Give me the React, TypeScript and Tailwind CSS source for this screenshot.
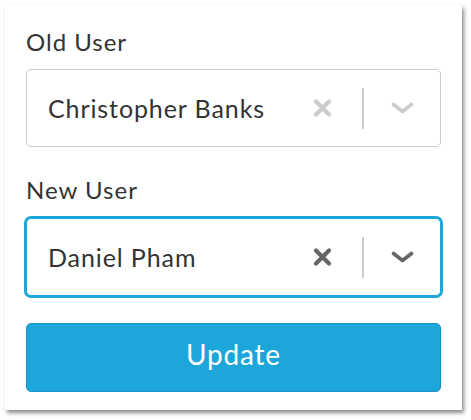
const ClearIcon = ({ color }: { color: string }) => (
  <svg width="19" height="20" viewBox="0 0 19 20" fill="none">
    <path d="M3 3.5L16 16.5M16 3.5L3 16.5" stroke={color} strokeWidth="4.2" strokeLinecap="round" />
  </svg>
);

const ChevronIcon = ({ color }: { color: string }) => (
  <svg width="23" height="12" viewBox="0 0 23 12" fill="none">
    <path d="M2.5 2.5L11.5 9.5L20.5 2.5" stroke={color} strokeWidth="3.6" strokeLinecap="round" strokeLinejoin="round" />
  </svg>
);

const Select = ({ value, focused }: { value: string; focused?: boolean }) => {
  const iconColor = focused ? "#666666" : "#cccccc";
  return (
    <div
      className={
        "flex h-[78px] items-center rounded-[5px] border bg-white pl-[21px] pr-[26px] " +
        (focused ? "border-[#1ca6d9] shadow-[0_0_0_2px_#1ca6d9]" : "border-[#cccccc]")
      }
    >
      <span className="flex-1 text-[25px] leading-[30px] tracking-[0.9px] text-[#333333]">{value}</span>
      <ClearIcon color={iconColor} />
      <span className="ml-[30px] mr-[27px] h-[41px] w-[2px] bg-[#cccccc]" />
      <ChevronIcon color={iconColor} />
    </div>
  );
};

export default function App() {
  return (
    <div className="min-h-[420px] bg-white pl-[5px] pt-[5px] font-['Lato','Liberation_Sans',sans-serif]">
      <div className="h-[405px] w-[457px] bg-white px-[21px] pt-[23px] shadow-[2px_3px_4px_rgba(0,0,0,0.45)]">
        <div className="h-[28px] text-[24px] leading-[28px] tracking-[1px] text-[#333333]">Old User</div>
        <div className="mt-[13px]">
          <Select value="Christopher Banks" />
        </div>
        <div className="mt-[29px] h-[28px] text-[24px] leading-[28px] tracking-[1px] text-[#333333]">New User</div>
        <div className="mt-[14px]">
          <Select value="Daniel Pham" focused />
        </div>
        <button className="mt-[27px] flex h-[69px] w-full items-center justify-center rounded-[5px] border border-[#1992c6] bg-[#1ca6d9] pb-[8px] text-[28px] tracking-[0.8px] text-white">
          Update
        </button>
      </div>
    </div>
  );
}
